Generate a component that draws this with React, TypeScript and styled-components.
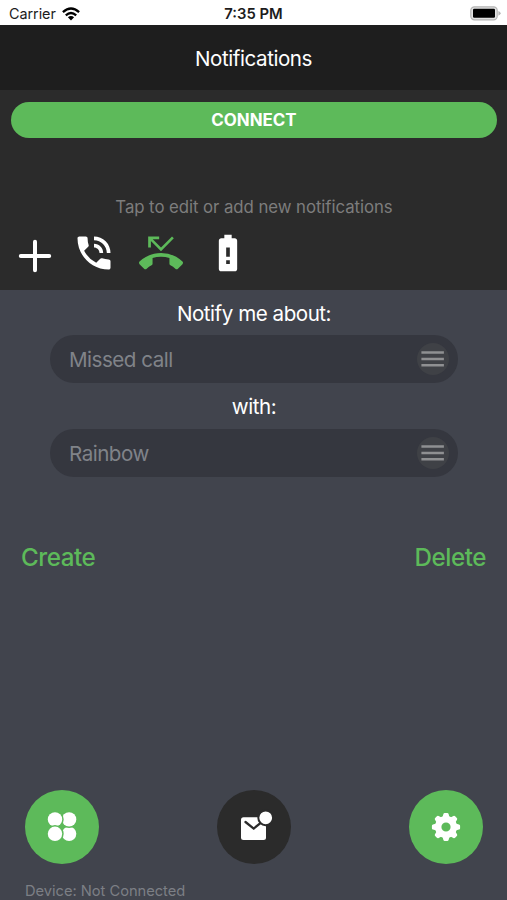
import React from "react";
import styled, { createGlobalStyle } from "styled-components";
import { MdPhoneInTalk, MdPhoneMissed, MdBatteryAlert } from "react-icons/md";

const GlobalStyle = createGlobalStyle`
  * { box-sizing: border-box; }
  body { margin: 0; background: #41444d; font-family: Inter, "Liberation Sans", sans-serif; }
  button { font: inherit; border: 0; padding: 0; background: none; }
`;

const Screen = styled.div`
  display: flex;
  flex-direction: column;
  height: 900px;
  overflow: hidden;
  background: #41444d;
  color: #fff;
`;

const StatusBar = styled.div`
  display: grid;
  grid-template-columns: 1fr auto 1fr;
  align-items: center;
  height: 25px;
  padding: 2px 6px 0 9px;
  background: #fff;
  color: #1c1c1c;
`;

const Carrier = styled.div`
  display: flex;
  align-items: center;
  gap: 6px;
  font-size: 14.4px;
  line-height: 18px;
  letter-spacing: -0.05px;
`;

const Clock = styled.div`
  padding-right: 3px;
  font-size: 14.8px;
  line-height: 18px;
  font-weight: 600;
`;

const BatteryIcon = styled.svg`
  justify-self: end;
`;

const Header = styled.header`
  display: flex;
  align-items: center;
  justify-content: center;
  height: 65px;
  padding-top: 2px;
  background: #1e1e1e;
  font-size: 20.6px;
  letter-spacing: -0.45px;
`;

const Panel = styled.section`
  display: flex;
  flex-direction: column;
  height: 200px;
  padding: 12px 10px 0 11px;
  background: #2b2b2b;
`;

const ConnectButton = styled.button`
  height: 35.5px;
  padding-top: 1px;
  border-radius: 18px;
  background: #5dba5a;
  color: #fff;
  font-size: 16.9px;
  font-weight: 700;
`;

const Hint = styled.p`
  margin: 58.5px 0 0;
  text-align: center;
  font-size: 16.8px;
  line-height: 22px;
  letter-spacing: -0.06px;
  color: #7d7d7d;
`;

const NotificationRow = styled.div`
  display: flex;
  gap: 23px;
  margin: 13px 0 0 2px;
`;

const NotificationIcon = styled.button<{ $active?: boolean }>`
  display: flex;
  width: 44px;
  height: 44px;
  color: ${(p) => (p.$active ? "#5dba5a" : "#fff")};
`;

const AddIcon = styled(NotificationIcon)`
  margin: 3px -8px 0 0;
`;

const Form = styled.section`
  display: flex;
  flex-direction: column;
  padding: 0 49px 0 50px;
`;

const Label = styled.label`
  height: 45.25px;
  line-height: 47px;
  text-align: center;
  font-size: 20.6px;
  letter-spacing: -0.48px;
`;

const Field = styled.div`
  display: flex;
  align-items: center;
  justify-content: space-between;
  height: 48px;
  padding: 0 9px 0 19px;
  border-radius: 24px;
  background: #35373f;
  color: #808389;
  font-size: 20.6px;
  letter-spacing: -0.5px;
`;

const FieldValue = styled.span`
  padding-top: 1px;
`;

const MenuButton = styled.button`
  display: flex;
  width: 32px;
  height: 32px;
  border-radius: 50%;
  background: #3f4146;
`;

const Actions = styled.div`
  display: flex;
  justify-content: space-between;
  margin-top: 66px;
  padding: 0 21px 0 21px;
`;

const TextButton = styled.button`
  color: #5dba5a;
  font-size: 24.2px;
  line-height: 30px;
  font-weight: 550;
  letter-spacing: -0.45px;
`;

const Footer = styled.footer`
  margin-top: auto;
  height: 110px;
  padding: 0 24.5px 0 25px;
`;

const Nav = styled.nav`
  display: flex;
  justify-content: space-between;
`;

const RoundButton = styled.button<{ $current?: boolean }>`
  display: flex;
  width: 74px;
  height: 74px;
  border-radius: 50%;
  background: ${(p) => (p.$current ? "#2b2b2b" : "#5dba5a")};
`;

const DeviceStatus = styled.p`
  margin: 18px 0 0;
  font-size: 14.7px;
  line-height: 18px;
  letter-spacing: -0.03px;
  color: #7c7f85;
`;

const ChooseButton = () => (
  <MenuButton aria-label="Choose">
    <svg width="32" height="32" viewBox="0 0 32 32" stroke="#8f9092" strokeWidth="2.5">
      <path d="M4.4 9.6H26.9M4.4 16H26.9M4.4 22.2H26.9" />
    </svg>
  </MenuButton>
);

const GEAR_ANGLES = [0, 45, 90, 135, 180, 225, 270, 315];

export default function App() {
  return (
    <>
      <GlobalStyle />
      <Screen>
        <StatusBar>
          <Carrier>
            <span>Carrier</span>
            <svg width="18" height="14" viewBox="0 0 18 14" fill="none" stroke="#000" strokeWidth="2.3">
              <path d="M0.9 5.2 Q9 -2.2 17.1 5.2" />
              <path d="M3.8 8.3 Q9 3.6 14.2 8.3" />
              <path d="M9 13.4 L5.9 10.3 Q9 7.9 12.1 10.3 Z" fill="#000" stroke="none" />
            </svg>
          </Carrier>
          <Clock>7:35 PM</Clock>
          <BatteryIcon width="31" height="15" viewBox="0 0 31 15">
            <rect x="0.8" y="0.8" width="26.4" height="13" rx="3.6" fill="#e2e2e2" stroke="#b4b4b4" strokeWidth="1.2" />
            <rect x="3" y="2.8" width="22" height="9" rx="1.2" fill="#000" />
            <path d="M28.4 4.9 Q30.6 5.8 30.6 7.3 Q30.6 8.8 28.4 9.7Z" fill="#b4b4b4" />
          </BatteryIcon>
        </StatusBar>
        <Header>Notifications</Header>
        <Panel>
          <ConnectButton>CONNECT</ConnectButton>
          <Hint>Tap to edit or add new notifications</Hint>
          <NotificationRow>
            <AddIcon aria-label="Add">
              <svg width="44" height="44" viewBox="0 0 44 44" stroke="#fff" strokeWidth="4" strokeLinecap="round">
                <path d="M22 7.8V36.2M7.8 22H36.2" />
              </svg>
            </AddIcon>
            <NotificationIcon aria-label="Incoming call"><MdPhoneInTalk size={44} /></NotificationIcon>
            <NotificationIcon aria-label="Missed call" $active><MdPhoneMissed size={44} /></NotificationIcon>
            <NotificationIcon aria-label="Low battery"><MdBatteryAlert size={44} /></NotificationIcon>
          </NotificationRow>
        </Panel>
        <Form>
          <Label>Notify me about:</Label>
          <Field><FieldValue>Missed call</FieldValue><ChooseButton /></Field>
          <Label>with:</Label>
          <Field><FieldValue>Rainbow</FieldValue><ChooseButton /></Field>
        </Form>
        <Actions>
          <TextButton>Create</TextButton>
          <TextButton>Delete</TextButton>
        </Actions>
        <Footer>
          <Nav>
            <RoundButton aria-label="Apps">
              <svg width="74" height="74" viewBox="0 0 74 74" fill="#fff" stroke="#5dba5a" strokeWidth="3" paintOrder="stroke">
                <circle cx="44.1" cy="43.8" r="7.2" />
                <circle cx="44.1" cy="29.4" r="7.2" />
                <circle cx="30" cy="29.4" r="7.2" />
                <circle cx="30" cy="43.8" r="7.2" />
              </svg>
            </RoundButton>
            <RoundButton aria-label="Notifications" $current>
              <svg width="74" height="74" viewBox="0 0 74 74">
                <rect x="24" y="27.2" width="25" height="22.8" rx="2.5" fill="#fff" />
                <path d="M28.5 32 L36.7 38.6 L45 31.8" fill="none" stroke="#2b2b2b" strokeWidth="2.3" strokeLinecap="round" />
                <circle cx="48.7" cy="27.8" r="7.4" fill="#fff" stroke="#2b2b2b" strokeWidth="2" />
              </svg>
            </RoundButton>
            <RoundButton aria-label="Settings">
              <svg width="74" height="74" viewBox="0 0 74 74" fill="#fff">
                {GEAR_ANGLES.map((a) => (
                  <path
                    key={a}
                    d="M32.2 28.6 L33.7 26.6 L34.4 24 Q34.7 22.9 35.8 22.9 H38.2 Q39.3 22.9 39.6 24 L40.3 26.6 L41.8 28.6 Z"
                    transform={`rotate(${a} 37 37)`}
                  />
                ))}
                <circle cx="37" cy="37" r="7.8" fill="none" stroke="#fff" strokeWidth="6.4" />
              </svg>
            </RoundButton>
          </Nav>
          <DeviceStatus>Device: Not Connected</DeviceStatus>
        </Footer>
      </Screen>
    </>
  );
}
